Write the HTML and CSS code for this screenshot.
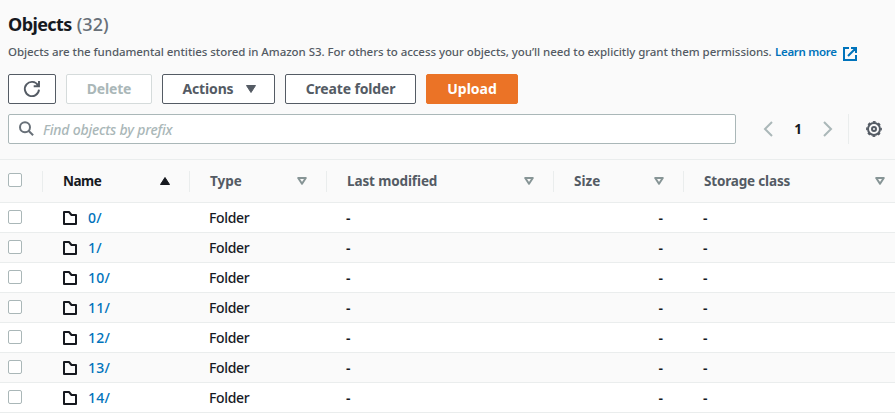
FILE: index.html
```html
<!DOCTYPE html>
<html lang="en">
<head>
<meta charset="utf-8">
<title>Objects</title>
<link rel="stylesheet" href="styles.css">
</head>
<body>
<header class="panel-header">
  <h2 class="title">Objects <span class="count">(32)</span></h2>
  <p class="description"><span class="desc-text">Objects are the fundamental entities stored in Amazon S3. For others to access your objects, you’ll need to explicitly grant them permissions.</span> <a class="learn">Learn more</a><svg class="external" width="14" height="14" viewBox="0 0 14 14"><path d="M6 1H1v12h12V8M8 1h5v5M13 1L5 9" fill="none" stroke="currentColor" stroke-width="2"/></svg></p>
  <div class="actions">
    <button class="btn refresh" aria-label="Refresh"><svg width="18" height="18" viewBox="0 0 18 18"><path d="M16 9.6A7.1 7.1 0 1 1 15 5.3M16 1v5.2h-5.3" fill="none" stroke="currentColor" stroke-width="1.9"/></svg></button>
    <button class="btn delete" disabled><span>Delete</span></button>
    <button class="btn menu"><span>Actions</span><svg width="10" height="8" viewBox="0 0 10 8"><path d="M.5.5h9L5 7.5z" fill="currentColor" stroke="currentColor" stroke-linejoin="round"/></svg></button>
    <button class="btn create"><span>Create folder</span></button>
    <button class="btn upload"><span>Upload</span></button>
  </div>
  <div class="tools">
    <div class="search">
      <svg width="16" height="16" viewBox="0 0 16 16"><circle cx="6" cy="6.3" r="5" fill="none" stroke="currentColor" stroke-width="2"/><path d="M9.5 9.8l4.6 4.5" stroke="currentColor" stroke-width="2"/></svg>
      <span class="placeholder">Find objects by prefix</span>
    </div>
    <nav class="pager">
      <svg width="10" height="16" viewBox="0 0 10 16"><path d="M9 1L2 8l7 7" fill="none" stroke="currentColor" stroke-width="2"/></svg>
      <span class="page">1</span>
      <svg width="10" height="16" viewBox="0 0 10 16"><path d="M1 1l7 7-7 7" fill="none" stroke="currentColor" stroke-width="2"/></svg>
    </nav>
    <div class="settings"><svg width="16" height="16" viewBox="0 0 16 16"><circle cx="8" cy="8" r="6" fill="none" stroke="currentColor" stroke-width="2"/><circle cx="8" cy="8" r="7.2" fill="none" stroke="currentColor" stroke-width="1.4" stroke-dasharray="2.83 2.825" stroke-dashoffset="1.41"/><circle cx="8" cy="8" r="2" fill="none" stroke="currentColor" stroke-width="2"/></svg></div>
  </div>
</header>
<main class="table">
  <div class="row head">
    <div class="check"><i class="box"></i></div>
    <div class="th sorted"><span class="h-name">Name</span><svg width="10" height="8" viewBox="0 0 10 8"><path d="M.5 7.5h9L5 .5z" fill="currentColor" stroke="currentColor" stroke-linejoin="round"/></svg></div>
    <div class="th"><span class="h-type">Type</span><svg width="10" height="8" viewBox="0 0 10 8"><path d="M1.2 1h7.6L5 6.8z" class="sort"/></svg></div>
    <div class="th"><span class="h-mod">Last modified</span><svg width="10" height="8" viewBox="0 0 10 8"><path d="M1.2 1h7.6L5 6.8z" class="sort"/></svg></div>
    <div class="th"><span class="h-size">Size</span><svg width="10" height="8" viewBox="0 0 10 8"><path d="M1.2 1h7.6L5 6.8z" class="sort"/></svg></div>
    <div class="th"><span class="h-class">Storage class</span><svg width="10" height="8" viewBox="0 0 10 8"><path d="M1.2 1h7.6L5 6.8z" class="sort"/></svg></div>
  </div>
  <div class="row"><div class="check"><i class="box"></i></div><div class="name"><svg class="folder" width="14" height="14" viewBox="0 0 14 14"><path d="M1 1h5l2.5 3H13v9H1z"/></svg><a>0/</a></div><div class="type">Folder</div><div class="dash">-</div><div class="dash right">-</div><div class="dash">-</div></div>
  <div class="row"><div class="check"><i class="box"></i></div><div class="name"><svg class="folder" width="14" height="14" viewBox="0 0 14 14"><path d="M1 1h5l2.5 3H13v9H1z"/></svg><a>1/</a></div><div class="type">Folder</div><div class="dash">-</div><div class="dash right">-</div><div class="dash">-</div></div>
  <div class="row"><div class="check"><i class="box"></i></div><div class="name"><svg class="folder" width="14" height="14" viewBox="0 0 14 14"><path d="M1 1h5l2.5 3H13v9H1z"/></svg><a>10/</a></div><div class="type">Folder</div><div class="dash">-</div><div class="dash right">-</div><div class="dash">-</div></div>
  <div class="row"><div class="check"><i class="box"></i></div><div class="name"><svg class="folder" width="14" height="14" viewBox="0 0 14 14"><path d="M1 1h5l2.5 3H13v9H1z"/></svg><a>11/</a></div><div class="type">Folder</div><div class="dash">-</div><div class="dash right">-</div><div class="dash">-</div></div>
  <div class="row"><div class="check"><i class="box"></i></div><div class="name"><svg class="folder" width="14" height="14" viewBox="0 0 14 14"><path d="M1 1h5l2.5 3H13v9H1z"/></svg><a>12/</a></div><div class="type">Folder</div><div class="dash">-</div><div class="dash right">-</div><div class="dash">-</div></div>
  <div class="row"><div class="check"><i class="box"></i></div><div class="name"><svg class="folder" width="14" height="14" viewBox="0 0 14 14"><path d="M1 1h5l2.5 3H13v9H1z"/></svg><a>13/</a></div><div class="type">Folder</div><div class="dash">-</div><div class="dash right">-</div><div class="dash">-</div></div>
  <div class="row"><div class="check"><i class="box"></i></div><div class="name"><svg class="folder" width="14" height="14" viewBox="0 0 14 14"><path d="M1 1h5l2.5 3H13v9H1z"/></svg><a>14/</a></div><div class="type">Folder</div><div class="dash">-</div><div class="dash right">-</div><div class="dash">-</div></div>
</main>
</body>
</html>
```
FILE: styles.css
```css
* { box-sizing: border-box; }
body {
  margin: 0;
  height: 413px;
  overflow: hidden;
  background: #fafafa;
  color: #16191f;
  font-family: "Noto Sans", sans-serif;
  font-size: 14px;
}
svg { display: block; flex: none; }
.panel-header { height: 159px; padding: 12px 8px 0; }
.title { margin: 0; height: 25px; line-height: 25px; font-size: 18px; font-weight: 700; letter-spacing: -0.6px; white-space: nowrap; }
.count { margin-left: 1px; font-weight: 500; color: #687078; letter-spacing: 0; }
.description {
  display: flex; margin: 4px 0 0; height: 22px; line-height: 22px;
  font-size: 11.5px; color: #545b64; white-space: nowrap;
}
.desc-text { width: 767px; font-weight: 500; letter-spacing: -0.06px; }
.learn, .name a { color: #0073bb; }
.learn { width: 68px; font-weight: 600; letter-spacing: -0.3px; }
.external { color: #0073bb; margin-top: 6px; }
.actions { display: flex; gap: 10px; margin-top: 11px; }
.btn {
  display: flex; align-items: center; justify-content: center;
  height: 30px; padding: 0; border: 1px solid #545b64; border-radius: 2px;
  background: #fff; color: #545b64;
  font: 700 14px/20px "Noto Sans", sans-serif; white-space: nowrap;
}
.refresh { width: 48px; }
.delete { width: 86px; border-color: #d5dbdb; color: #aab7b8; letter-spacing: -0.2px; }
.menu { width: 113px; padding-left: 1px; gap: 12px; letter-spacing: -0.15px; }
.create { width: 131px; letter-spacing: -0.15px; }
.upload { width: 92px; background: #eb7326; border-color: #eb7326; color: #fff; }
.tools { display: flex; margin-top: 10px; height: 30px; }
.search {
  display: flex; align-items: center; width: 728px; padding-left: 10px; gap: 8px;
  border: 1px solid #aab7b8; border-radius: 2px; background: #fff; color: #687078;
}
.placeholder { color: #aab7b8; font-style: italic; font-weight: 500; letter-spacing: -0.2px; }
.pager { display: flex; align-items: center; width: 112px; padding-left: 27px; color: #aab7b8; }
.page { width: 50px; text-align: center; font-size: 13.5px; font-weight: 700; color: #16191f; }
.settings { display: flex; align-items: center; padding-left: 17px; border-left: 1px solid #eaeded; color: #545b64; }

.row {
  display: grid; grid-template-columns: 43px 147px 137px 227px 130px 1fr;
  height: 30px; align-items: center; border-bottom: 1px solid #eaeded; background: #fff; line-height: 20px;
  font-weight: 500;
}
.row:nth-child(odd) { background: #fafafa; }
.row.head { height: 44px; border-top: 1px solid #eaeded; }
.check { padding-left: 8px; }
.box { display: block; width: 14px; height: 14px; border: 1px solid #aab7b8; border-radius: 2px; background: #fff; margin-top: -2px; }
.th {
  display: flex; align-items: center; justify-content: space-between;
  height: 21px; padding: 0 20px; border-left: 1px solid #eaeded; margin-left: -1px;
  color: #545b64; font-size: 13.5px; font-weight: 700; white-space: nowrap;
}
.th:last-child { padding-right: 10px; }
.th.sorted { color: #16191f; }
.h-name { letter-spacing: -0.5px; }
.h-mod { letter-spacing: -0.12px; }
.h-class { letter-spacing: -0.17px; }
.sort { fill: none; stroke: #879596; stroke-width: 2; stroke-linejoin: round; }
.name { display: flex; align-items: center; padding-left: 20px; gap: 11px; }
.name a { letter-spacing: 0.3px; }
.folder { fill: none; stroke: #16191f; stroke-width: 2; stroke-linejoin: round; }
.type { padding-left: 19px; letter-spacing: -0.35px; }
.dash { padding-left: 19px; font-weight: 600; }
.right { text-align: right; padding-right: 21px; }
```
